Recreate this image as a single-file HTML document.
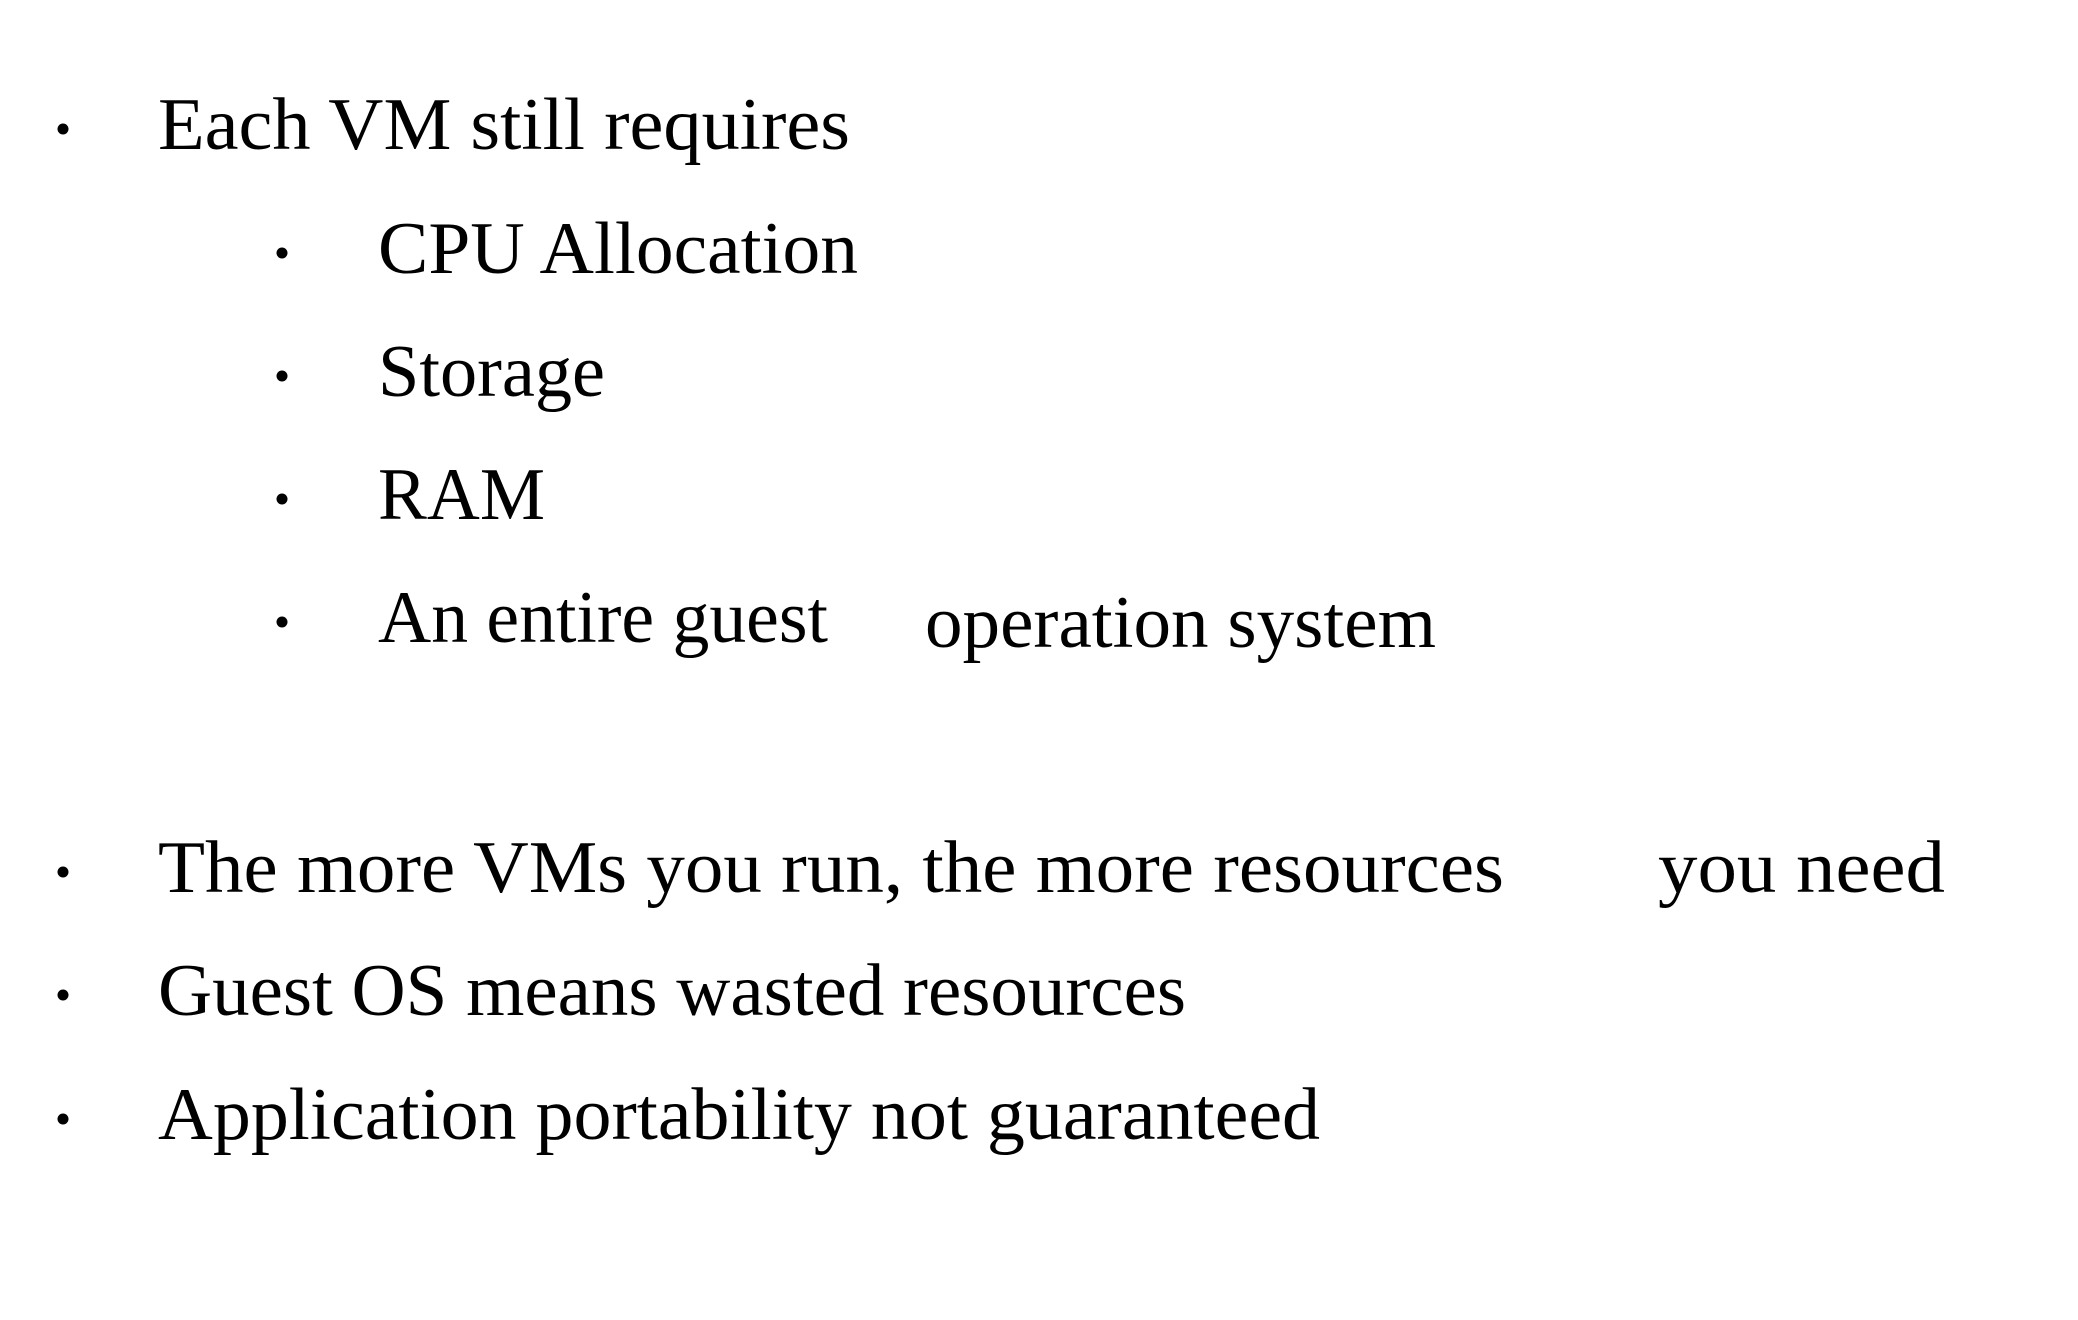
<!DOCTYPE html>
<html><head><meta charset="utf-8"><style>
html,body{margin:0;padding:0;background:#fff;width:2078px;height:1320px;overflow:hidden}
svg{display:block}
text{font-family:"Liberation Serif","Times New Roman",serif;font-size:74px;fill:#000}
</style></head><body>
<svg width="2078" height="1320" viewBox="0 0 2078 1320" xmlns="http://www.w3.org/2000/svg">
<g fill="#000">
<circle cx="63" cy="129" r="5.5"/>
<circle cx="282" cy="253" r="5.5"/>
<circle cx="282" cy="376" r="5.5"/>
<circle cx="282" cy="499" r="5.5"/>
<circle cx="282" cy="622" r="5.5"/>
<circle cx="63" cy="872" r="5.5"/>
<circle cx="63" cy="995" r="5.5"/>
<circle cx="63" cy="1119" r="5.5"/>
</g>
<text x="158" y="149" textLength="692" lengthAdjust="spacingAndGlyphs">Each  VM still requires</text>
<text x="378" y="273" textLength="480" lengthAdjust="spacingAndGlyphs">CPU  Allocation</text>
<text x="378" y="396" textLength="227" lengthAdjust="spacingAndGlyphs">Storage</text>
<text x="378" y="519" textLength="167" lengthAdjust="spacingAndGlyphs">RAM</text>
<text x="378" y="642" textLength="450" lengthAdjust="spacingAndGlyphs">An entire guest</text>
<text x="925" y="647" textLength="511" lengthAdjust="spacingAndGlyphs">operation system</text>
<text x="158" y="892" textLength="1346" lengthAdjust="spacingAndGlyphs">The more VMs you run, the more resources</text>
<text x="1658" y="892" textLength="287" lengthAdjust="spacingAndGlyphs">you  need</text>
<text x="158" y="1015" textLength="1028" lengthAdjust="spacingAndGlyphs">Guest OS  means wasted resources</text>
<text x="158" y="1139" textLength="1162" lengthAdjust="spacingAndGlyphs">Application portability not  guaranteed</text>
</svg>
</body></html>
